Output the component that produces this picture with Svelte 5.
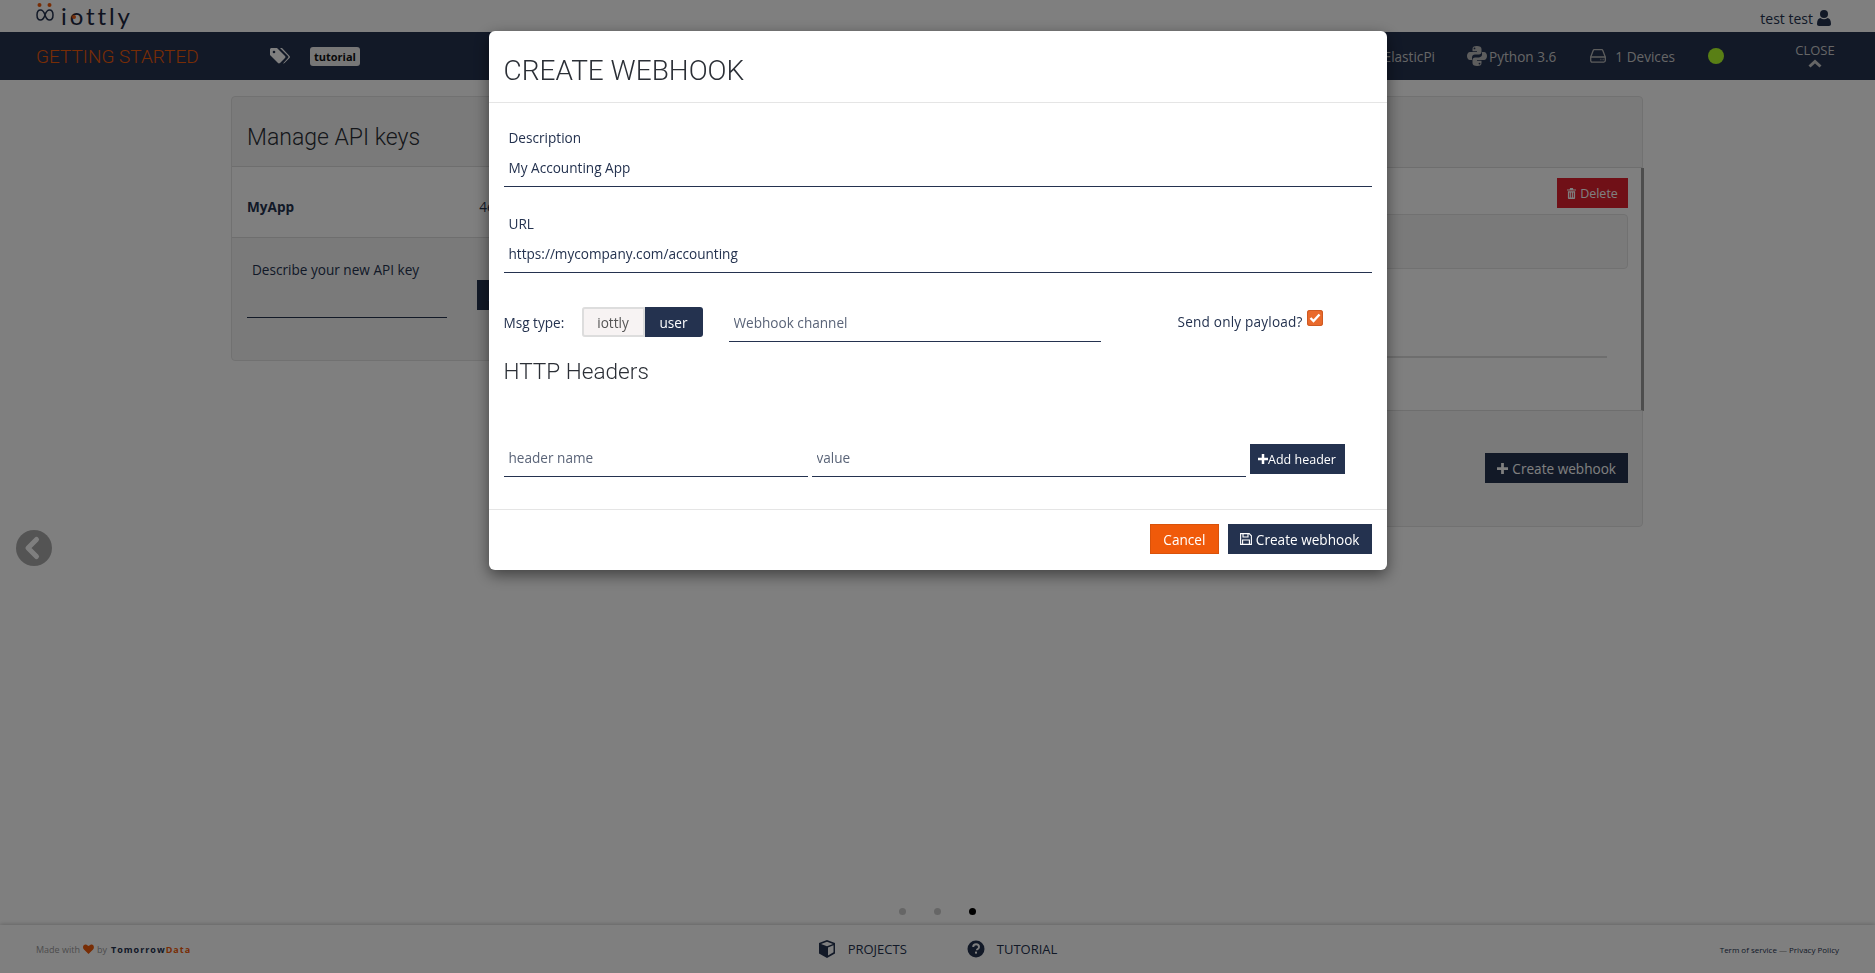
<script>
  let msgType = $state('user');
  let payloadOnly = $state(true);
  let description = $state('My Accounting App');
  let url = $state('https://mycompany.com/accounting');

  const devices = 1;
</script>

<div class="page">
  <header class="topbar">
    <div class="logo">
      <svg viewBox="0 0 18 20" width="18" height="20" fill="none">
        <circle cx="3.5" cy="3" r="2" fill="#f05a0a" />
        <circle cx="13.5" cy="3" r="2" fill="#f05a0a" />
        <path d="M9 13c-1-3-2.500-5-4.500-5S1 10 1 13s1.500 5 3.500 5S8 16 9 13s2.500-5 4.500-5S17 10 17 13s-1.500 5-3.500 5S10 16 9 13z" stroke="#24324f" stroke-width="1.500" />
      </svg>
      <span class="wordmark">iottly<i class="logo-dot"></i></span>
    </div>
    <div class="user">test test
      <svg viewBox="0 0 14 16" width="14" height="16" fill="#24324f"><circle cx="7" cy="4" r="4" /><path d="M0 14c0-4 1.500-6 3.500-6 1 .8 2.200 1.200 3.500 1.200S9.500 8.800 10.500 8C12.500 8 14 10 14 14c0 1.300-.8 2-2 2H2c-1.200 0-2-.7-2-2z" /></svg>
    </div>
  </header>

  <nav class="projectbar">
    <div class="project-title">GETTING STARTED</div>
    <svg class="tag-icon" viewBox="0 0 20 16" width="20" height="16" fill="#fff">
      <path d="M0 1.500C0 .7.700 0 1.500 0H7l8 8c.6.600.6 1.500 0 2l-5 5c-.6.600-1.500.6-2 0l-8-8z" />
      <path d="M10 0h2l7.500 8c.6.600.6 1.500 0 2l-5 5c-.4.400-1 .6-1.500.4l5-5.400c.6-.5.600-1.400 0-2z" />
      <circle cx="4" cy="4" r="1.300" fill="#24324f" />
    </svg>
    <span class="badge">tutorial</span>

    <div class="project-meta">
      <span class="board">ElasticPi</span>
      <span class="meta-item">
        <svg viewBox="0 0 20 20" width="20" height="20" fill="#bbb">
          <path d="M9.800 0C6.500 0 5.500 1.300 5.500 3v2.300H10V6H3C1.200 6 0 7.700 0 10s1.200 4 3 4h2v-2.600C5 9.700 6.300 8.600 8 8.600h4c1.400 0 2.500-1.100 2.500-2.500V3c0-1.700-1.500-3-4.700-3zM7.500 1.500a.9.900 0 1 1 0 1.800.9.900 0 0 1 0-1.800z" />
          <path d="M10.200 20c3.300 0 4.300-1.300 4.300-3v-2.300H10V14h7c1.800 0 3-1.700 3-4s-1.200-4-3-4h-2v2.600c0 1.700-1.300 2.800-3 2.800H8c-1.400 0-2.500 1.100-2.500 2.500V17c0 1.700 1.500 3 4.700 3zm2.300-1.500a.9.900 0 1 1 0-1.800.9.900 0 0 1 0 1.800z" />
        </svg>
        Python 3.6
      </span>
      <span class="meta-item devices">
        <svg viewBox="0 0 16 14" width="16" height="14" fill="none" stroke="#bbb" stroke-width="1.300">
          <path d="M.7 8l2.500-6.500c.2-.5.500-.8 1-.8h7.600c.5 0 .8.300 1 .8L15.300 8v3.600c0 .9-.6 1.500-1.500 1.500H2.200c-.9 0-1.500-.6-1.500-1.500z" />
          <path d="M.7 8h14.600M10.500 10.500h.8M12.700 10.500h.8" />
        </svg>
        {devices} Devices
      </span>
      <span class="status-dot"></span>
      <button class="close-btn" type="button">
        CLOSE
        <svg viewBox="0 0 14 9" width="14" height="9" fill="none" stroke="#ccc" stroke-width="3"><path d="M1.500 7.500L7 2.500l5.500 5" /></svg>
      </button>
    </div>
  </nav>

  <main class="content">
    <section class="panel keys">
      <h2>Manage API keys</h2>
      <div class="key-row">
        <strong>MyApp</strong>
        <span class="key-value">4e2b7c91d0</span>
      </div>
      <div class="key-new">
        <div class="field-short">
          <label for="newkey">Describe your new API key</label>
          <input id="newkey" type="text" />
        </div>
        <button class="btn navy add-key" type="button">Add</button>
      </div>
    </section>

    <section class="panel hooks">
      <div class="hooks-head"></div>
      <div class="hooks-list">
        <div class="hook-top">
          <button class="btn red" type="button">
            <svg viewBox="0 0 10 12" width="9" height="11" fill="currentColor"><path d="M3.500 0h3l.6 1.500H10v1.200H0V1.500h2.900zM1 3.500h8V11c0 .6-.4 1-1 1H2c-.6 0-1-.4-1-1zm1.600 1.300v5.700h.9V4.800zm2 0v5.700h.9V4.800zm2 0v5.700h.9V4.800z" /></svg>
            Delete
          </button>
        </div>
        <div class="well"></div>
        <div class="hook-rule"></div>
      </div>
      <div class="hooks-foot">
        <button class="btn navy" type="button">
          <svg viewBox="0 0 12 12" width="11" height="11" fill="currentColor"><path d="M4.500 0h3v4.500H12v3H7.500V12h-3V7.500H0v-3h4.500z" /></svg>
          Create webhook
        </button>
      </div>
    </section>
  </main>

  <div class="dots">
    <span></span>
    <span></span>
    <span class="active"></span>
  </div>

  <footer class="footer">
    <div class="made">Made with
      <svg viewBox="0 0 12 11" width="11" height="10" fill="#f05a0a"><path d="M6 11L1 6C-.5 4.500-.3 2 1 1s3-.8 5 1.200C8 .2 10 0 11 1s1.500 3.500 0 5z" /></svg>
      by <b>Tomorrow</b><b class="orange">Data</b>
    </div>
    <div class="footer-nav">
      <a href="#projects">
        <svg viewBox="0 0 18 18" width="18" height="18"><path d="M9 0l8 3v10.500L9 18l-8-4.500V3z" fill="#24324f" /><path d="M3 4l6-2.300L15 4 9 6.300z M10 7.500l5.500-2.200v7L10 15.500z" fill="#fff" /></svg>
        PROJECTS
      </a>
      <a href="#tutorial">
        <svg viewBox="0 0 18 18" width="18" height="18"><circle cx="9" cy="9" r="8.500" fill="#24324f" /><path d="M6.200 7c0-1.700 1.200-2.700 2.900-2.700S12 5.300 12 6.900c0 2-2.200 2-2.200 3.400" fill="none" stroke="#fff" stroke-width="1.900" /><rect x="8" y="11.600" width="2" height="2" fill="#fff" /></svg>
        TUTORIAL
      </a>
    </div>
    <div class="legal"><a href="#terms">Term of service</a> — <a href="#privacy">Privacy Policy</a></div>
  </footer>

  <button class="prev" type="button" aria-label="Previous">
    <svg viewBox="0 0 36 36" width="36" height="36"><circle cx="18" cy="18" r="18" fill="#a9a9a9" /><path d="M20.500 9.500L12 18l8.500 8.500" fill="none" stroke="#fff" stroke-width="5" stroke-linecap="round" stroke-linejoin="round" /></svg>
  </button>
</div>

<div class="overlay">
  <div class="modal">
    <div class="modal-head">
      <h1>CREATE WEBHOOK</h1>
    </div>
    <div class="modal-body">
      <div class="field">
        <label for="desc">Description</label>
        <input id="desc" type="text" bind:value={description} />
      </div>
      <div class="field">
        <label for="url">URL</label>
        <input id="url" type="text" bind:value={url} />
      </div>

      <div class="msg-row">
        <span class="msg-label">Msg type:</span>
        <div class="toggle">
          <button type="button" class:on={msgType === 'iottly'} onclick={() => (msgType = 'iottly')}>iottly</button>
          <button type="button" class:on={msgType === 'user'} onclick={() => (msgType = 'user')}>user</button>
        </div>
        <input class="channel" type="text" placeholder="Webhook channel" />
        <label class="payload" for="payload">Send only payload?</label>
        <button id="payload" class="check" class:checked={payloadOnly} type="button" aria-label="Send only payload" onclick={() => (payloadOnly = !payloadOnly)}>
          {#if payloadOnly}
            <svg viewBox="0 0 16 16" width="16" height="16" fill="none" stroke="#fff" stroke-width="2.400"><path d="M3.500 8l3 3 6-6.500" /></svg>
          {/if}
        </button>
      </div>

      <h3>HTTP Headers</h3>

      <div class="header-row">
        <input class="h-name" type="text" placeholder="header name" />
        <input class="h-value" type="text" placeholder="value" />
        <button class="btn navy add" type="button">
          <svg viewBox="0 0 12 12" width="10" height="10" fill="currentColor"><path d="M4.500 0h3v4.500H12v3H7.500V12h-3V7.500H0v-3h4.500z" /></svg>Add header
        </button>
      </div>
    </div>
    <div class="modal-foot">
      <button class="btn orange-btn" type="button">Cancel</button>
      <button class="btn navy" type="button">
        <svg viewBox="0 0 12 12" width="12" height="12" fill="none" stroke="currentColor" stroke-width="1.100"><path d="M.6.600h8.600l2.200 2.200v8.600H.6z" /><path d="M3 .6v3.400h5V.6M2.600 11.400V7h6.800v4.400" /></svg>
        Create webhook
      </button>
    </div>
  </div>
</div>

<style>
  :global(body) {
    margin: 0;
    background: #fff;
    color: #24324f;
    font-family: "Open Sans", sans-serif;
    font-size: 13.6px;
  }

  .page {
    height: 973px;
    display: flex;
    flex-direction: column;
    overflow: hidden;
    position: relative;
  }

  /* header */
  .topbar {
    height: 32px;
    flex: none;
    display: flex;
    justify-content: space-between;
    padding: 0 44px 0 36px;
  }

  .logo {
    display: flex;
    align-items: flex-start;
    gap: 7px;
    padding-top: 2px;
  }

  .wordmark {
    position: relative;
    font-family: "Lato", sans-serif;
    font-size: 24px;
    line-height: 28px;
    letter-spacing: 2.900px;
    color: #1c2740;
  }

  .logo-dot {
    position: absolute;
    left: 11px;
    top: 13px;
    width: 4px;
    height: 4px;
    border-radius: 50%;
    background: #f05a0a;
  }

  .user {
    display: flex;
    align-items: center;
    gap: 4px;
    font-size: 14px;
    padding-top: 4px;
  }

  .projectbar {
    height: 48px;
    flex: none;
    background: #24324f;
    display: flex;
    align-items: center;
    padding: 0 40px 0 36px;
  }

  .project-title {
    width: 234px;
    font-family: Roboto, sans-serif;
    font-size: 19px;
    font-weight: 300;
    color: #f05a0a;
  }

  .badge {
    margin-left: 20px;
    background: #eee;
    color: #111;
    font-size: 11px;
    font-weight: 700;
    padding: 2px 4px;
    border-radius: 3px;
  }

  .project-meta {
    margin-left: auto;
    display: flex;
    align-items: center;
    color: #ccc;
  }

  .board { margin-right: 32px; }

  .meta-item {
    display: flex;
    align-items: center;
    gap: 2px;
    margin-right: 34px;
  }

  .devices { gap: 9px; margin-right: 33px; }

  .status-dot {
    width: 16px;
    height: 16px;
    border-radius: 50%;
    background: #b2ff2a;
    margin-right: 71px;
  }

  .close-btn {
    width: 40px;
    padding: 0;
    background: none;
    border: 0;
    color: #ccc;
    font: inherit;
    font-size: 13px;
    display: flex;
    flex-direction: column;
    align-items: center;
    gap: 2px;
    line-height: 14px;
    margin-top: -1px;
  }

  /* background cards */
  .content {
    flex: 1;
    display: flex;
    align-items: flex-start;
    padding: 16px 232px 0 231px;
  }

  .panel {
    background: #f5f5f5;
    border: 1px solid #e3e3e3;
    box-sizing: border-box;
  }

  .keys {
    width: 560px;
    height: 265px;
    border-radius: 4px 0 0 4px;
  }

  .keys h2 {
    margin: 0;
    height: 70px;
    box-sizing: border-box;
    padding: 27px 15px 0;
    font-family: Roboto, sans-serif;
    font-size: 23px;
    font-weight: 300;
    color: #2b2f36;
    border-bottom: 1px solid #ddd;
  }

  .key-row {
    height: 71px;
    box-sizing: border-box;
    padding: 30px 15px 0;
    display: flex;
    gap: 185px;
    background: #fff;
    border-bottom: 1px solid #ddd;
  }

  .key-new {
    padding: 22px 15px;
    display: flex;
    gap: 30px;
  }

  .field-short {
    width: 200px;
  }

  .field-short label {
    display: block;
    padding-left: 5px;
    margin-bottom: 16px;
  }

  .field-short input {
    display: block;
    width: 100%;
    box-sizing: border-box;
    height: 23px;
    border: 0;
    border-bottom: 1px solid #24324f;
    background: none;
  }

  .add-key { margin-top: 20px; }

  .hooks {
    flex: 1;
    height: 431px;
    border-radius: 0 4px 4px 0;
    display: flex;
    flex-direction: column;
  }

  .hooks-head {
    height: 70px;
    flex: none;
    border-bottom: 1px solid #ddd;
  }

  .hooks-list {
    height: 243px;
    flex: none;
    background: #fff;
    border-bottom: 1px solid #ddd;
    border-right: 3px solid #9a9a9a;
    margin-right: -2px;
    padding: 10px 13px 0 0;
    box-sizing: border-box;
  }

  .hook-top {
    display: flex;
    justify-content: flex-end;
  }

  .well {
    height: 55px;
    margin-top: 6px;
    background: #f5f5f5;
    border: 1px solid #e3e3e3;
    border-radius: 4px;
    box-sizing: border-box;
  }

  .hook-rule {
    margin: 87px 21px 0 0;
    height: 2px;
    background: #ddd;
  }

  .hooks-foot {
    flex: 1;
    display: flex;
    justify-content: flex-end;
    padding: 42px 14px 0 0;
    align-items: flex-start;
  }

  .btn {
    height: 30px;
    box-sizing: border-box;
    border: 1px solid transparent;
    padding: 0 11px;
    font: inherit;
    display: inline-flex;
    align-items: center;
    justify-content: center;
    gap: 4px;
    white-space: nowrap;
    color: #fff;
  }

  .navy { background: #24324f; color: #fff; }
  .red { background: #e0202f; color: #fff; font-size: 12.500px; width: 71px; padding: 0; }
  .orange-btn { background: #f05a0a; border-color: #d9520a; width: 69px; padding: 0; }

  /* bottom */
  .dots {
    position: absolute;
    left: 0;
    right: 0;
    top: 908px;
    display: flex;
    justify-content: center;
    gap: 28px;
  }

  .dots span {
    width: 7px;
    height: 7px;
    border-radius: 50%;
    background: #ccc;
  }

  .dots .active { background: #000; }

  .footer {
    height: 48px;
    flex: none;
    display: grid;
    grid-template-columns: 1fr auto 1fr;
    align-items: center;
    padding: 0 36px;
    box-shadow: 0 -1px 4px rgba(0, 0, 0, 0.2);
  }

  .made {
    font-size: 9px;
    color: #999;
    display: flex;
    align-items: center;
    gap: 3px;
  }

  .made b { color: #24324f; letter-spacing: 1px; margin-left: 1px; }
  .made b.orange { color: #f05a0a; margin-left: -3px; }

  .footer-nav {
    display: flex;
    gap: 60px;
  }

  .footer-nav a {
    display: flex;
    align-items: center;
    gap: 12px;
    color: #24324f;
    text-decoration: none;
    font-size: 13px;
  }

  .legal {
    justify-self: end;
    font-size: 8px;
    color: #888;
  }

  .legal a { color: #24324f; text-decoration: none; }

  .prev {
    position: absolute;
    left: 16px;
    top: 530px;
    padding: 0;
    border: 0;
    background: none;
    line-height: 0;
  }

  /* modal */
  .overlay {
    position: fixed;
    inset: 0;
    background: rgba(0, 0, 0, 0.5);
  }

  .modal {
    width: 898px;
    margin: 31px auto 0;
    background: #fff;
    border-radius: 6px;
    box-shadow: 0 5px 15px rgba(0, 0, 0, 0.5);
  }

  .modal-head {
    height: 72px;
    box-sizing: border-box;
    padding: 7px 15px 0;
    display: flex;
    align-items: center;
    border-bottom: 1px solid #e5e5e5;
  }

  .modal-head h1 {
    margin: 0;
    font-family: Roboto, sans-serif;
    font-size: 28px;
    font-weight: 300;
    color: #2b2f36;
  }

  .modal-body {
    padding: 25px 15px 32px;
    box-sizing: border-box;
  }

  .field {
    margin-bottom: 27px;
  }

  .field label {
    display: block;
    padding-left: 5px;
    height: 20px;
    line-height: 20px;
  }

  .field input {
    display: block;
    width: 100%;
    height: 39px;
    box-sizing: border-box;
    padding: 0 5px;
    border: 0;
    border-bottom: 1px solid #24324f;
    font: inherit;
    color: #24324f;
    outline: 0;
  }

  .msg-row {
    display: flex;
    align-items: center;
    margin-top: 29px;
    height: 40px;
  }

  .msg-label {
    width: 78px;
    padding-top: 1px;
  }

  .toggle {
    display: flex;
  }

  .toggle button {
    height: 30px;
    box-sizing: border-box;
    padding: 0;
    border: 0;
    font: inherit;
    background: #f7f3f3;
    color: #555;
    width: 63px;
    border-radius: 3px 0 0 3px;
    box-shadow: inset 0 0 0 2px #ddd;
  }

  .toggle button:last-child {
    width: 58px;
    border-radius: 0 3px 3px 0;
  }

  .toggle button.on {
    background: #24324f;
    color: #fff;
    box-shadow: none;
  }

  .channel {
    width: 372px;
    height: 40px;
    box-sizing: border-box;
    margin-left: 26px;
    padding: 1px 5px 0;
    border: 0;
    border-bottom: 1px solid #24324f;
    font: inherit;
    outline: 0;
  }

  input::placeholder {
    color: #5a6478;
    opacity: 1;
  }

  .payload {
    margin-left: 77px;
    width: 129px;
    padding-bottom: 2px;
    letter-spacing: 0.2px;
  }

  .check {
    width: 16px;
    height: 16px;
    padding: 0;
    border: 0;
    border-radius: 3px;
    background: #e96a2c;
    box-shadow: inset 0 0 0 1px #cf5a22;
    line-height: 0;
    margin-top: -9px;
  }

  h3 {
    margin: 16px 0 0;
    font-family: Roboto, sans-serif;
    font-size: 22.600px;
    font-weight: 300;
    color: #2b2f36;
  }

  .header-row {
    display: flex;
    gap: 4px;
    margin-top: 54px;
    align-items: flex-end;
  }

  .header-row input {
    height: 38px;
    box-sizing: border-box;
    padding: 0 5px;
    border: 0;
    border-bottom: 1px solid #24324f;
    font: inherit;
    outline: 0;
  }

  .h-name { width: 304px; }
  .h-value { width: 434px; }

  .add {
    width: 95px;
    padding: 0;
    gap: 0;
    font-size: 12.500px;
    margin-bottom: 3px;
  }

  .modal-foot {
    height: 61px;
    box-sizing: border-box;
    border-top: 1px solid #e5e5e5;
    display: flex;
    justify-content: flex-end;
    gap: 9px;
    padding: 14px 15px 0;
  }
</style>
